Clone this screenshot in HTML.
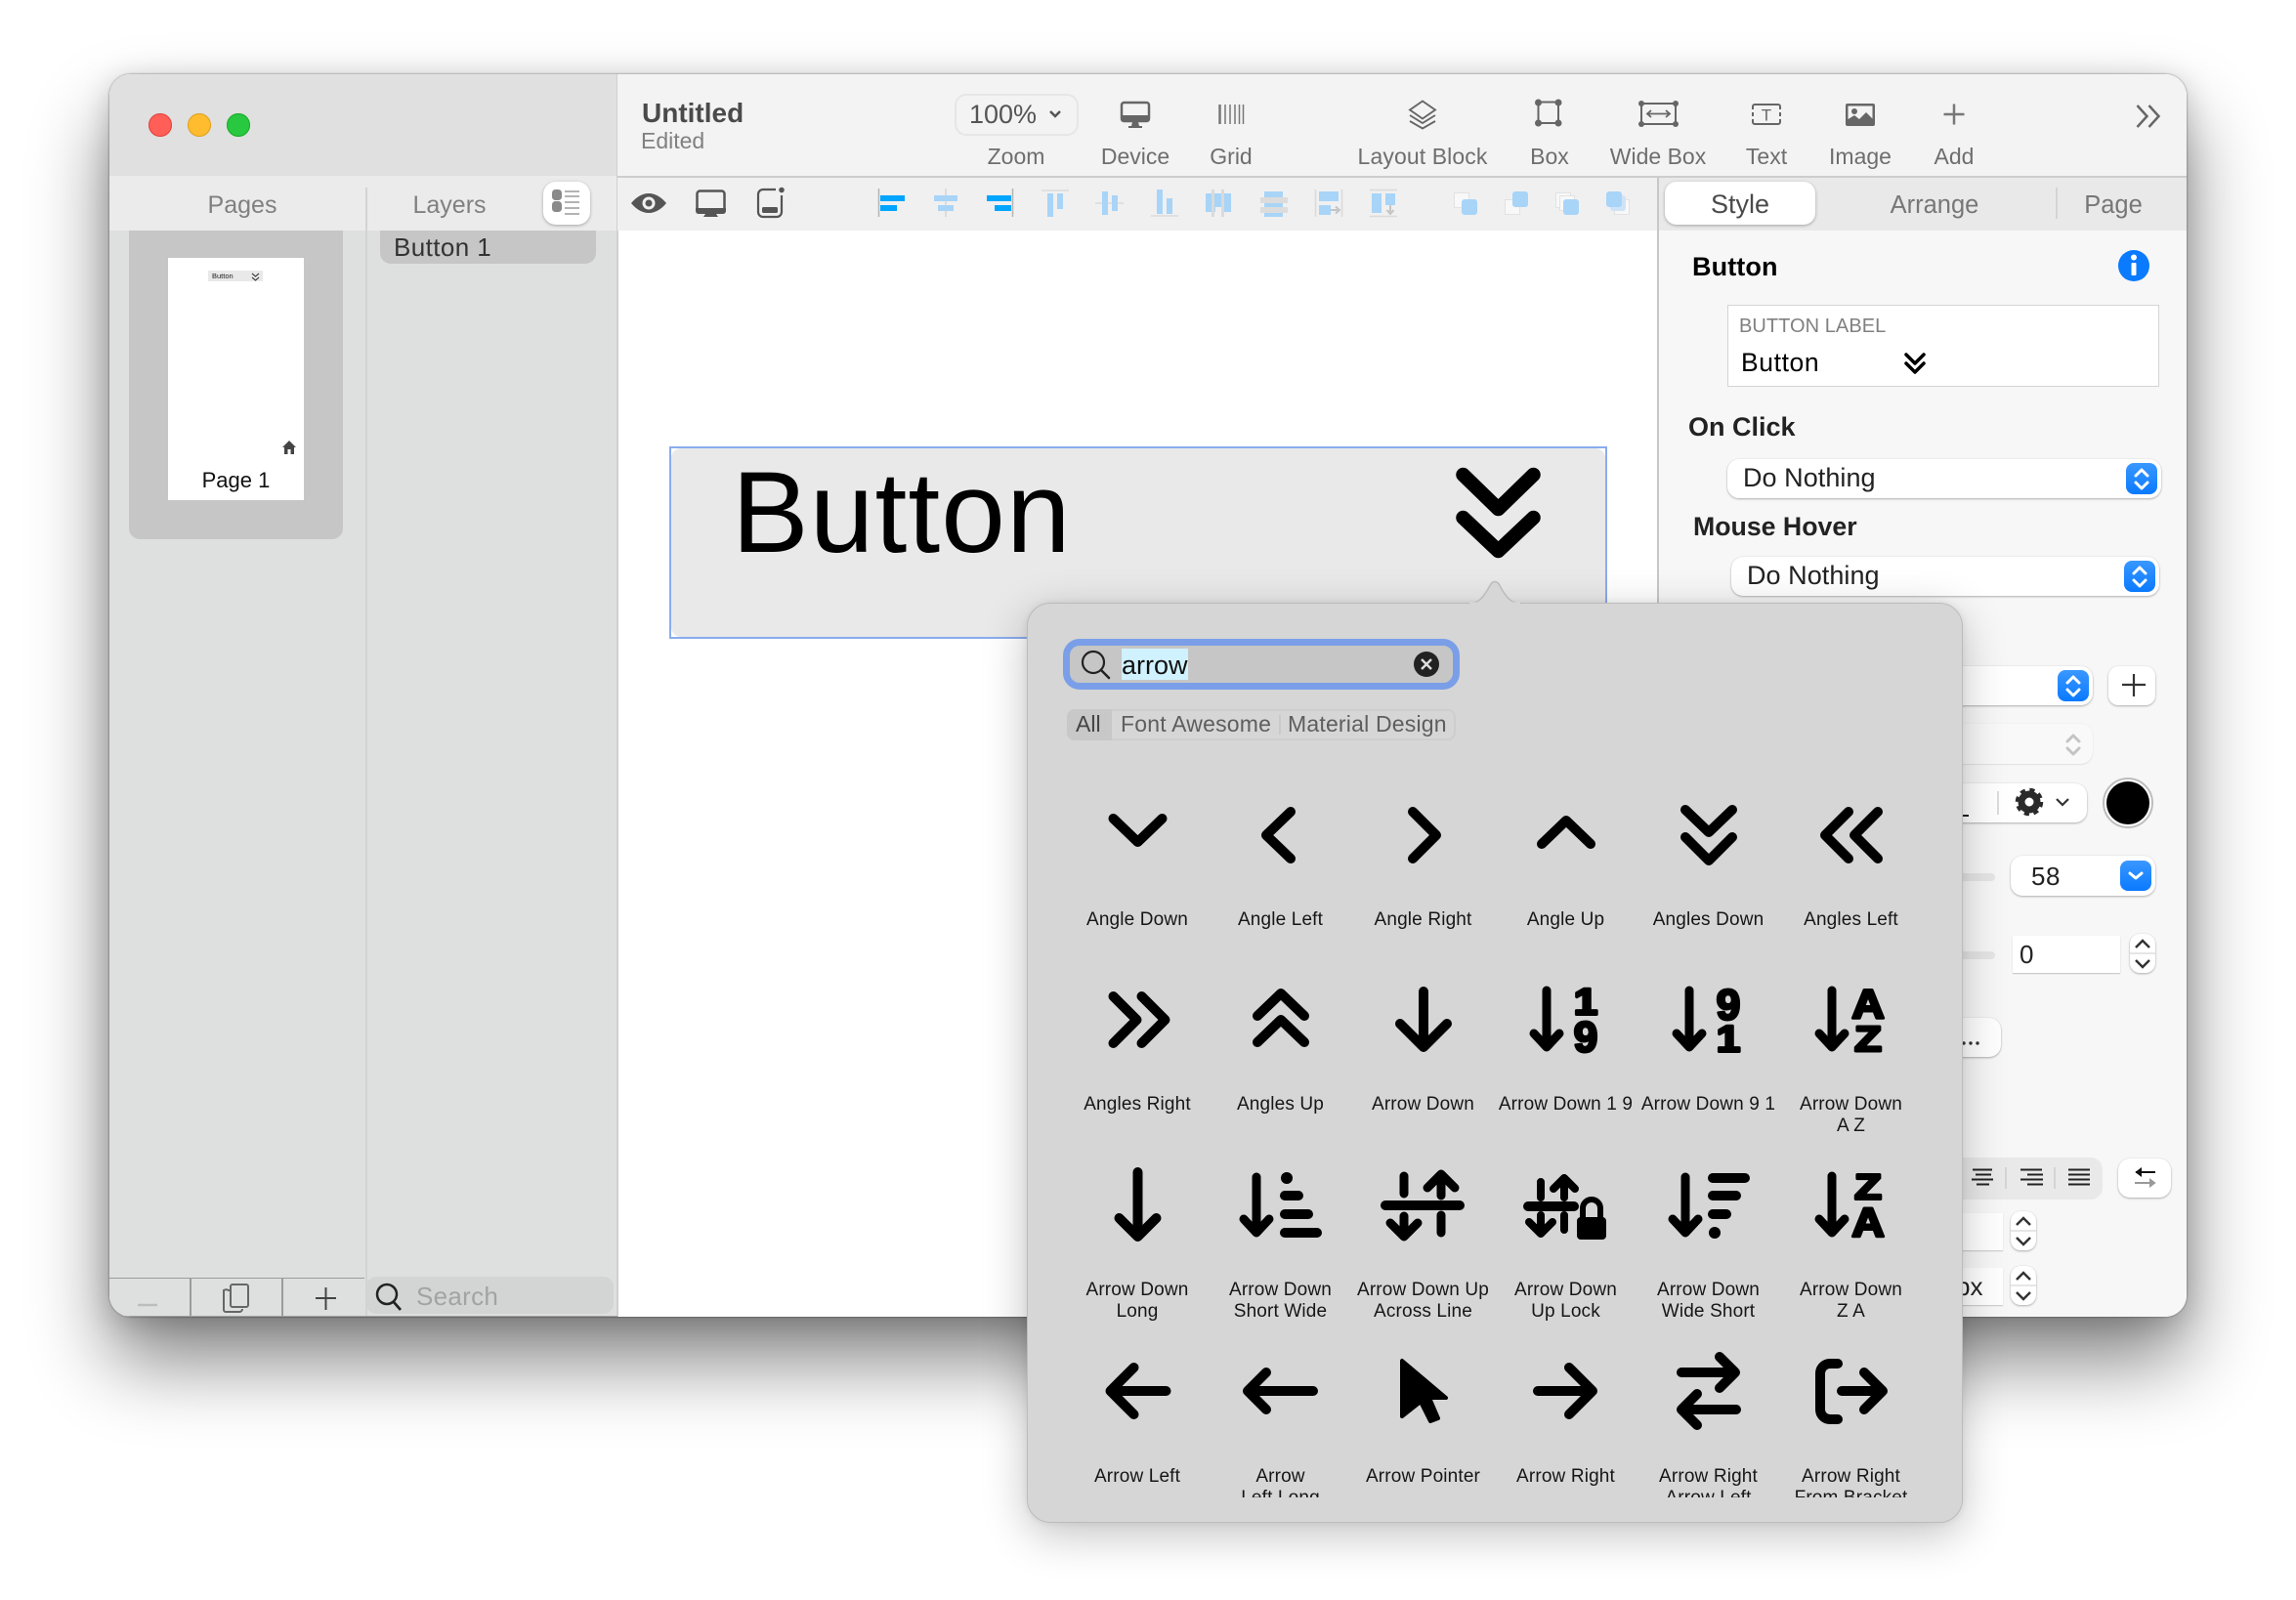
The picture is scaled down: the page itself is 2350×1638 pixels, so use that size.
<!DOCTYPE html>
<html><head><meta charset="utf-8"><title>Untitled</title>
<style>
html,body{margin:0;padding:0;background:#fff}
body{width:2350px;height:1638px;position:relative;overflow:hidden;font-family:"Liberation Sans",sans-serif}
.a{position:absolute}
.t{position:absolute;white-space:nowrap;line-height:1}
.c{transform:translateX(-50%)}
.tb{font-size:23px;color:#6e6e6e;top:149px}
.w{stroke:#fff;stroke-width:3;fill:none;stroke-linecap:round;stroke-linejoin:round}
.field{position:absolute;background:#fff;border-radius:12px;box-shadow:0 1px 2px rgba(0,0,0,.28),0 0 1px rgba(0,0,0,.15)}
.blue{position:absolute;border-radius:8px;background:linear-gradient(#3a97ff,#0a7aff)}
.lab{position:absolute;width:150px;text-align:center;font-size:19px;line-height:22px;color:#161616;letter-spacing:.15px}
</style></head><body>

<!-- window -->
<div class="a" style="left:112px;top:76px;width:2126px;height:1272px;border-radius:22px;box-shadow:0 46px 80px rgba(0,0,0,.48),0 6px 30px rgba(0,0,0,.18),0 0 2px rgba(0,0,0,.5)"></div>
<div class="a" style="left:112px;top:76px;width:2126px;height:1272px;border-radius:22px;overflow:hidden;background:#fff">
 <div style="position:absolute;left:-112px;top:-76px;width:2350px;height:1638px">

  <!-- left -->
  <div class="a" style="left:111px;top:75px;width:521px;height:105px;background:#dfe0df"></div>
  <div class="a" style="left:111px;top:180px;width:521px;height:56px;background:#ebebeb"></div>
  <div class="a" style="left:111px;top:236px;width:521px;height:1113px;background:#dee0df"></div>
  <div class="a" style="left:374px;top:192px;width:1.5px;height:1157px;background:#d2d3d2"></div>
  <div class="a" style="left:631px;top:75px;width:1.5px;height:1274px;background:#d0d0d0"></div>
  <div class="a" style="left:152px;top:116px;width:24px;height:24px;border-radius:50%;background:#ff5f57;box-shadow:inset 0 0 0 1px #e0443e"></div>
  <div class="a" style="left:192px;top:116px;width:24px;height:24px;border-radius:50%;background:#febc2e;box-shadow:inset 0 0 0 1px #dea123"></div>
  <div class="a" style="left:232px;top:116px;width:24px;height:24px;border-radius:50%;background:#28c840;box-shadow:inset 0 0 0 1px #1aab29"></div>
  <div class="t c" style="left:248px;top:198px;font-size:25px;color:#808080">Pages</div>
  <div class="t c" style="left:460px;top:198px;font-size:25px;color:#808080">Layers</div>
  <div class="a" style="left:556px;top:186px;width:48px;height:44px;background:#fff;border-radius:13px;box-shadow:0 1px 3px rgba(0,0,0,.3)"></div>
  <div class="a" style="left:132px;top:236px;width:219px;height:316px;background:#c6c6c6;border-radius:0 0 11px 11px"></div>
  <div class="a" style="left:172px;top:264px;width:139px;height:248px;background:#fff"></div>
  <div class="a" style="left:213px;top:277px;width:56px;height:11px;background:#e9e9e9"></div>
  <div class="t" style="left:217px;top:279px;font-size:7.5px;color:#222">Button</div>
  <div class="t c" style="left:241.5px;top:481px;font-size:22px;color:#111">Page 1</div>
  <div class="a" style="left:389px;top:236px;width:221px;height:34px;background:#c6c6c6;border-radius:0 0 11px 11px"></div>
  <div class="t" style="left:403px;top:240px;font-size:26px;color:#333;letter-spacing:.4px">Button 1</div>

  <!-- bottom left bar -->
  <div class="a" style="left:111px;top:1308px;width:262px;height:41px;background:#dee0df;border-top:1.5px solid #9b9b9b;box-sizing:border-box"></div>
  <div class="a" style="left:194px;top:1309px;width:1.5px;height:40px;background:#9b9b9b"></div>
  <div class="a" style="left:288px;top:1309px;width:1.5px;height:40px;background:#9b9b9b"></div>
  <div class="a" style="left:375px;top:1307px;width:253px;height:38px;background:#d3d5d4;border-radius:10px"></div>
  <div class="t" style="left:426px;top:1313.5px;font-size:26px;color:#a3a3a3;letter-spacing:.3px">Search</div>
  <div class="a" style="left:111px;top:1346.5px;width:521px;height:1.5px;background:#9f9f9f"></div>

  <!-- top toolbars -->
  <div class="a" style="left:632px;top:75px;width:1607px;height:105px;background:#f2f3f2"></div>
  <div class="a" style="left:632px;top:180px;width:1607px;height:1.5px;background:#cdcdcd"></div>
  <div class="a" style="left:632px;top:181.5px;width:1065px;height:54.5px;background:#f0f0f0"></div>
  <div class="t" style="left:657px;top:102px;font-size:28px;font-weight:bold;color:#4a4a4a">Untitled</div>
  <div class="t" style="left:656px;top:133px;font-size:23px;color:#808080">Edited</div>
  <div class="a" style="left:977px;top:96px;width:127px;height:43px;box-sizing:border-box;border:2px solid #e6e6e6;border-radius:12px"></div>
  <div class="t" style="left:992px;top:104px;font-size:27px;color:#555">100%</div>
  <div class="t tb c" style="left:1040px">Zoom</div>
  <div class="t tb c" style="left:1162px">Device</div>
  <div class="t tb c" style="left:1260px">Grid</div>
  <div class="t tb c" style="left:1456px;letter-spacing:.1px">Layout Block</div>
  <div class="t tb c" style="left:1586px">Box</div>
  <div class="t tb c" style="left:1697px">Wide Box</div>
  <div class="t tb c" style="left:1808px">Text</div>
  <div class="t tb c" style="left:1904px">Image</div>
  <div class="t tb c" style="left:2000px">Add</div>

  <!-- canvas button -->
  <div class="a" style="left:685px;top:457px;width:960px;height:197px;box-sizing:border-box;border:2px solid #8aacee;background:#fff"></div>
  <div class="a" style="left:687px;top:459px;width:956px;height:193px;background:#e9e9e9;border-radius:10px"></div>
  <div class="t" style="left:749px;top:466px;font-size:118px;color:#000;letter-spacing:1.1px">Button</div>

  <!-- right panel -->
  <div class="a" style="left:1697px;top:181.5px;width:542px;height:54.5px;background:#e9e9e9"></div>
  <div class="a" style="left:1697px;top:236px;width:542px;height:1113px;background:#f7f7f7"></div>
  <div class="a" style="left:1696px;top:181px;width:1.5px;height:1168px;background:#c8c8c8"></div>
  <div class="a" style="left:1704px;top:186px;width:154px;height:44px;background:#fff;border-radius:12px;box-shadow:0 1px 3px rgba(0,0,0,.3)"></div>
  <div class="t c" style="left:1781px;top:196px;font-size:27px;color:#4a4a4a">Style</div>
  <div class="t c" style="left:1980px;top:198px;font-size:25.5px;color:#777">Arrange</div>
  <div class="t c" style="left:2163px;top:198px;font-size:25.5px;color:#777">Page</div>
  <div class="a" style="left:2104px;top:192px;width:1.5px;height:32px;background:#d4d4d4"></div>
  <div class="t" style="left:1732px;top:260px;font-size:27px;font-weight:bold;color:#000;letter-spacing:.1px">Button</div>
  <div class="a" style="left:1768px;top:312px;width:442px;height:84px;box-sizing:border-box;background:#fff;border:1.5px solid #d4d4d4"></div>
  <div class="t" style="left:1780px;top:323.500px;font-size:20px;color:#808080;letter-spacing:.05px">BUTTON LABEL</div>
  <div class="t" style="left:1782px;top:358px;font-size:26.5px;color:#000;letter-spacing:.6px">Button</div>
  <div class="t" style="left:1728px;top:424px;font-size:27px;font-weight:bold;color:#222">On Click</div>
  <div class="field" style="left:1768px;top:470px;width:444px;height:40px"></div>
  <div class="t" style="left:1784px;top:476px;font-size:27px;color:#222;letter-spacing:.05px">Do Nothing</div>
  <div class="blue" style="left:2176px;top:474px;width:32px;height:32px"></div>
  <div class="t" style="left:1733px;top:526px;font-size:26.7px;font-weight:bold;color:#222">Mouse Hover</div>
  <div class="field" style="left:1772px;top:570px;width:438px;height:40px"></div>
  <div class="t" style="left:1788px;top:576px;font-size:27px;color:#222;letter-spacing:.05px">Do Nothing</div>
  <div class="blue" style="left:2174px;top:574px;width:32px;height:32px"></div>

  <div class="field" style="left:1800px;top:682px;width:342px;height:40px"></div>
  <div class="blue" style="left:2106px;top:686px;width:32px;height:32px"></div>
  <div class="field" style="left:2158px;top:682px;width:48px;height:40px;border-radius:10px"></div>
  <div class="field" style="left:1800px;top:741px;width:342px;height:41px;background:#f9f9f9;box-shadow:0 0 1px rgba(0,0,0,.12),0 1px 1px rgba(0,0,0,.08)"></div>
  <div class="field" style="left:1800px;top:802px;width:336px;height:40px"></div>
  <div class="a" style="left:2044px;top:810px;width:2px;height:24px;background:#dcdcdc"></div>
  <div class="a" style="left:2005px;top:834px;width:10px;height:2px;background:#222"></div>
  <div class="a" style="left:1800px;top:894px;width:242px;height:8px;border-radius:4px;background:#e6e6e6"></div>
  <div class="field" style="left:2058px;top:876px;width:148px;height:41px"></div>
  <div class="t" style="left:2079px;top:884px;font-size:26px;color:#222;letter-spacing:.5px">58</div>
  <div class="blue" style="left:2170px;top:881px;width:32px;height:31px"></div>
  <div class="a" style="left:1800px;top:974px;width:242px;height:8px;border-radius:4px;background:#e6e6e6"></div>
  <div class="a" style="left:2060px;top:958px;width:110px;height:38px;background:#fff;box-shadow:0 1px 1px rgba(0,0,0,.22)"></div>
  <div class="t" style="left:2067px;top:964px;font-size:26px;color:#222">0</div>
  <div class="field" style="left:2180px;top:956px;width:26px;height:40px;border-radius:10px"></div>
  <div class="field" style="left:1800px;top:1042px;width:248px;height:40px"></div>
  <div class="a" style="left:1800px;top:1185px;width:352px;height:43px;background:#e9e9e9;border-radius:12px"></div>
  <div class="a" style="left:2052px;top:1195px;width:2px;height:22px;background:#d4d4d4"></div>
  <div class="a" style="left:2102px;top:1195px;width:2px;height:22px;background:#d4d4d4"></div>
  <div class="field" style="left:2168px;top:1186px;width:54px;height:40px"></div>
  <div class="a" style="left:1800px;top:1242px;width:250px;height:38px;background:#fff;box-shadow:0 1px 1px rgba(0,0,0,.2)"></div>
  <div class="field" style="left:2058px;top:1240px;width:26px;height:40px;border-radius:10px"></div>
  <div class="a" style="left:1800px;top:1298px;width:250px;height:38px;background:#fff;box-shadow:0 1px 1px rgba(0,0,0,.2)"></div>
  <div class="t" style="left:2002px;top:1304px;font-size:26px;color:#222">px</div>
  <div class="field" style="left:2058px;top:1296px;width:26px;height:40px;border-radius:10px"></div>

  <!-- window icons -->
  <svg class="a" style="left:0;top:0" width="2350" height="1638" viewBox="0 0 2350 1638" fill="none">
   <!-- chev zoom -->
   <path d="M1075 114l5 5 5-5" stroke="#555" stroke-width="2.500"/>
   <!-- layer list -->
   <g fill="#8a8a8a"><rect x="565" y="194" width="10" height="11" rx="3.500"/><rect x="565" y="206" width="10" height="11" rx="3.500"/></g>
   <g stroke="#9a9a9a" stroke-width="1.600"><path d="M578 196h15M578 201h15M578 207h15M578 213h15M578 219h15"/></g>
   <!-- thumb -->
   <path d="M258 280l3.500 3 3.500-3M258 284l3.500 3 3.500-3" stroke="#222" stroke-width="1"/>
   <path d="M289 458l7-7 7 7h-2v7h-3.500v-5h-3v5H291v-7z" fill="#444"/>
   <!-- bottom bar -->
   <path d="M141 1336h20" stroke="#bdbdbd" stroke-width="2.500"/>
   <rect x="236" y="1315" width="18" height="23" rx="2" stroke="#666" stroke-width="2"/>
   <path d="M236 1321h-2a5 5 0 0 0-5 0v20a2 2 0 0 0 2 2h14a3 3 0 0 0 3-3" stroke="#666" stroke-width="2"/>
   <path d="M323 1329h21M333.500 1318v23" stroke="#444" stroke-width="2"/>
   <circle cx="396" cy="1325" r="10" stroke="#222" stroke-width="2.500"/><path d="M403 1333l7 8" stroke="#222" stroke-width="2.800"/>
   <!-- device -->
   <rect x="1148" y="105" width="28" height="19" rx="2.500" stroke="#666" stroke-width="2.500"/><path d="M1147 118h30v4a3 3 0 0 1-3 3h-24a3 3 0 0 1-3-3z" fill="#666"/><path d="M1159 125h6l1 4h3v2h-14v-2h3z" fill="#666"/>
   <!-- grid -->
   <path d="M1248.500 107v20" stroke="#777" stroke-width="2.500"/><path d="M1254 107v20M1259 107v20M1264 107v20M1268.500 107v20M1272.500 107v20" stroke="#777" stroke-width="1.500"/>
   <!-- layout block -->
   <path d="M1456 103.500l13 9-13 9-13-9z" stroke="#666" stroke-width="1.900"/><path d="M1443 118l13 8 13-8M1443 124l13 7.500 13-7.500" stroke="#666" stroke-width="1.900"/>
   <!-- box -->
   <path d="M1575 104.500h18M1575 126h18M1574.500 107v17M1595 107v17" stroke="#666" stroke-width="2"/><g fill="#666"><circle cx="1574.500" cy="105" r="3.500"/><circle cx="1595" cy="105" r="3.500"/><circle cx="1574.500" cy="126" r="3.500"/><circle cx="1595" cy="126" r="3.500"/></g>
   <!-- wide box -->
   <path d="M1681 106h33M1681 127h33M1680 108v17M1715 108v17" stroke="#666" stroke-width="2"/><g fill="#666"><circle cx="1680" cy="106" r="3"/><circle cx="1715" cy="106" r="3"/><circle cx="1680" cy="127" r="3"/><circle cx="1715" cy="127" r="3"/></g>
   <path d="M1686 116.500h23M1690 113l-4 3.500 4 3.500M1705 113l4 3.500-4 3.500" stroke="#666" stroke-width="1.800"/>
   <!-- text -->
   <path d="M1794 112v-3a2 2 0 0 1 2-2h24a2 2 0 0 1 2 2v3M1794 122v3a2 2 0 0 0 2 2h24a2 2 0 0 0 2-2v-3M1794 115v4M1822 115v4" stroke="#666" stroke-width="2"/>
   <text x="1808" y="123.500" font-size="17" fill="#666" text-anchor="middle" font-family="Liberation Sans">T</text>
   <!-- image -->
   <rect x="1889" y="106" width="30" height="23" rx="2" fill="#666"/><rect x="1891.500" y="108.500" width="25" height="18" fill="#f2f3f2"/><circle cx="1898" cy="114" r="3" fill="#666"/><path d="M1890 128v-5l8-5 5 4 7-7 8 8v5z" fill="#666"/>
   <!-- add -->
   <path d="M2000 106.500v21M1989.500 117h21" stroke="#777" stroke-width="2.500"/>
   <!-- expand -->
   <path d="M2187.500 108l10 11-10 11M2199.500 108l10 11-10 11" stroke="#666" stroke-width="2.500"/>

   <!-- eye -->
   <path d="M646 208c5-6 11-10 18-10s13 4 18 10c-5 6-11 10-18 10s-13-4-18-10z" fill="#555"/><circle cx="664" cy="208" r="6.500" fill="#f0f0f0"/><circle cx="664" cy="208" r="3.500" fill="#555"/>
   <!-- monitor -->
   <rect x="713.500" y="195.500" width="28" height="22" rx="3" stroke="#555" stroke-width="2.500"/><path d="M712 213h31v3a3 3 0 0 1-3 3h-25a3 3 0 0 1-3-3z" fill="#555"/><path d="M722 219h11l2 3h-15z" fill="#555"/>
   <!-- phone -->
   <path d="M794 194h-13a5 5 0 0 0-5 5v18a5 5 0 0 0 5 5h14a5 5 0 0 0 5-5v-17" stroke="#555" stroke-width="2.200"/><circle cx="800" cy="194.500" r="2.800" fill="#555"/><rect x="780" y="212" width="16" height="6" rx="1.500" fill="#555"/>

   <!-- align -->
   <path d="M899.500 193v29" stroke="#b5b5b5" stroke-width="1.500"/>
   <rect x="901" y="200" width="25" height="6" fill="#00a5ff"/><rect x="901" y="210" width="17" height="6" fill="#00a5ff"/>
   <path d="M968 193v29" stroke="#d6d6d6" stroke-width="1.500"/>
   <rect x="956" y="200" width="24" height="6" fill="#a8d4f8"/><rect x="960" y="210" width="16" height="6" fill="#a8d4f8"/>
   <path d="M1036.500 193v29" stroke="#b5b5b5" stroke-width="1.500"/>
   <rect x="1010" y="200" width="25" height="6" fill="#00a5ff"/><rect x="1018" y="210" width="17" height="6" fill="#00a5ff"/>
   <path d="M1066 195h28" stroke="#dadada" stroke-width="1.500"/><rect x="1072" y="198" width="6" height="24" fill="#a8d4f8"/><rect x="1082" y="198" width="6" height="16" fill="#a8d4f8"/>
   <path d="M1121 208h29" stroke="#dadada" stroke-width="1.500"/><rect x="1128" y="196" width="6" height="24" fill="#a8d4f8"/><rect x="1138" y="200" width="6" height="16" fill="#a8d4f8"/>
   <path d="M1178 221h28" stroke="#dadada" stroke-width="1.500"/><rect x="1184" y="194" width="6" height="25" fill="#a8d4f8"/><rect x="1194" y="203" width="6" height="16" fill="#a8d4f8"/>
   <rect x="1234" y="198" width="26" height="19" fill="#a8d4f8"/><rect x="1244" y="212" width="6" height="6" fill="#f0f0f0"/><path d="M1241.500 194v28M1251.500 194v28" stroke="#dadada" stroke-width="3"/>
   <rect x="1294" y="196" width="19" height="26" fill="#a8d4f8"/><rect x="1290" y="202" width="28" height="6" fill="#dcdcdc"/><rect x="1290" y="212" width="28" height="6" fill="#dcdcdc"/>
   <path d="M1346.500 194v28M1373.500 194v28" stroke="#dadada" stroke-width="1.500"/><rect x="1350" y="196" width="20" height="10" fill="#a8d4f8"/><rect x="1350" y="210" width="12" height="10" fill="#a8d4f8"/><path d="M1362 215h7M1367 211.500l4 3.500-4 3.500" stroke="#c4c4c4" stroke-width="2"/>
   <path d="M1402 194.500h28M1402 221.500h28" stroke="#dadada" stroke-width="1.500"/><rect x="1404" y="198" width="10" height="20" fill="#a8d4f8"/><rect x="1418" y="198" width="10" height="12" fill="#a8d4f8"/><path d="M1423 210v7M1419.500 215l3.500 4 3.500-4" stroke="#c4c4c4" stroke-width="2"/>
   <rect x="1488.500" y="197.500" width="15" height="15" fill="#f8f8f8" stroke="#e2e2e2"/><rect x="1496" y="204" width="16" height="16" rx="3" fill="#a8d4f8"/>
   <rect x="1540.500" y="204.500" width="15" height="15" fill="#f8f8f8" stroke="#e2e2e2"/><rect x="1548" y="196" width="16" height="16" rx="3" fill="#a8d4f8"/>
   <rect x="1592.500" y="197.500" width="15" height="15" fill="#f8f8f8" stroke="#e2e2e2"/><rect x="1596.500" y="200.500" width="15" height="15" fill="#f8f8f8" stroke="#e2e2e2"/><rect x="1600" y="204" width="16" height="16" rx="3" fill="#a8d4f8"/>
   <rect x="1652.500" y="204.500" width="15" height="15" fill="#f8f8f8" stroke="#e2e2e2"/><rect x="1648" y="200" width="16" height="16" rx="3" fill="#cfe3f7"/><rect x="1644" y="196" width="16" height="16" rx="3" fill="#a8d4f8"/>

   <!-- big chevrons -->
   <path d="M1497.500 486l36 35 36-35M1497.500 530l36 34 36-34" stroke="#000" stroke-width="14.500" stroke-linecap="round" stroke-linejoin="round"/>

   <!-- panel icons -->
   <circle cx="2184" cy="272" r="16" fill="#0a7aff"/><rect x="2181.500" y="269" width="5" height="13" rx="1" fill="#fff"/><circle cx="2184" cy="263.500" r="3" fill="#fff"/>
   <path d="M1951 363l9 9 9-9M1951 372l9 9 9-9" stroke="#000" stroke-width="3.500" stroke-linecap="round" stroke-linejoin="round"/>
   <path class="w" d="M2186 487l6-6 6 6M2186 494l6 6 6-6"/>
   <path class="w" d="M2184 587l6-6 6 6M2184 594l6 6 6-6"/>
   <path class="w" d="M2116 699l6-6 6 6M2116 706l6 6 6-6"/>
   <path d="M2116 759l6-6 6 6M2116 766l6 6 6-6" stroke="#c4c4c4" stroke-width="3" stroke-linecap="round" stroke-linejoin="round"/>
   <path d="M2172 701h24M2184 690v23" stroke="#333" stroke-width="2.200"/>
   <circle cx="2077" cy="821" r="12" stroke="#2a2a2a" stroke-width="4.500" stroke-dasharray="5 4.420"/>
   <circle cx="2077" cy="821" r="8" stroke="#2a2a2a" stroke-width="7"/>
   <path d="M2105 818l6 6 6-6" stroke="#333" stroke-width="2.200"/>
   <circle cx="2178" cy="822" r="25" stroke="#bdbdbd" stroke-width="2" fill="#fff"/><circle cx="2178" cy="822" r="22" fill="#000"/>
   <path class="w" d="M2180 894l6 5 6-5"/>
   <path d="M2186 970l7-7 7 7M2186 983l7 7 7-7" stroke="#333" stroke-width="2.500"/><path d="M2180 976h26" stroke="#ddd" stroke-width="1.500"/>
   <g fill="#333"><circle cx="2010" cy="1068" r="1.700"/><circle cx="2017" cy="1068" r="1.700"/><circle cx="2024" cy="1068" r="1.700"/></g>
   <g stroke="#222" stroke-width="2" transform="translate(0 1.500)"><path d="M2019 1196h20M2022 1201h16M2018 1206h22M2023 1211h13"/><path d="M2068 1196h22M2075 1201h16M2068 1206h23M2075 1211h16"/><path d="M2117 1196h22M2117 1201h22M2117 1206h22M2117 1211h22"/></g>
   <path d="M2186 1200h20M2187 1200l4-3v6z" stroke="#111" stroke-width="2" fill="#111"/><path d="M2185 1211h20M2205 1211l-4-3v6z" stroke="#999" stroke-width="2" fill="#999"/>
   <path d="M2064 1254l7-7 7 7M2064 1267l7 7 7-7" stroke="#333" stroke-width="2.500"/><path d="M2058 1260h26" stroke="#ddd" stroke-width="1.500"/>
   <path d="M2064 1310l7-7 7 7M2064 1323l7 7 7-7" stroke="#333" stroke-width="2.500"/><path d="M2058 1316h26" stroke="#ddd" stroke-width="1.500"/>
  </svg>
 </div>
</div>

<!-- popover -->
<div class="a" style="left:1051px;top:617px;width:958px;height:942px;box-sizing:border-box;background:#d6d6d6;border:1.5px solid #bcbcbc;border-radius:24px;box-shadow:0 12px 46px rgba(0,0,0,.24),0 0 8px rgba(0,0,0,.08)"></div>
<svg class="a" style="left:1490px;top:585px" width="90" height="36" viewBox="1490 585 90 36" fill="none">
 <path d="M1503 617.700c10 0 14-5 19-13l4-7q4-4.500 8 0l4 7c5 8 9 13 19 13" fill="#d6d6d6" stroke="#bcbcbc" stroke-width="1.500"/>
 <rect x="1504" y="616.500" width="52" height="3" fill="#d6d6d6"/>
</svg>

<div class="a" style="left:1088px;top:654px;width:406px;height:52px;box-sizing:border-box;border:7px solid #7a9fe8;border-radius:17px;background:#c6c6c6"></div>
<div class="a" style="left:1148px;top:664px;width:68px;height:32px;background:#d0f2ff"></div>
<div class="t" style="left:1148px;top:668px;font-size:27px;color:#111">arrow</div>
<div class="a" style="left:1092px;top:726px;width:398px;height:32px;box-sizing:border-box;border:2px solid #cecece;border-radius:8px"></div>
<div class="a" style="left:1092px;top:726px;width:46px;height:32px;background:#c8c8c8;border-radius:8px 0 0 8px"></div>
<div class="a" style="left:1309px;top:732px;width:1.5px;height:20px;background:#cacaca"></div>
<div class="t" style="left:1101px;top:729.5px;font-size:23px;color:#444">All</div>
<div class="t" style="left:1147px;top:729.5px;font-size:23px;color:#5e5e5e;letter-spacing:.2px">Font Awesome</div>
<div class="t" style="left:1318px;top:729.5px;font-size:23px;color:#5e5e5e;letter-spacing:.2px">Material Design</div>

<svg class="a" style="left:0;top:0" width="2350" height="1638" viewBox="0 0 2350 1638" fill="none">
 <circle cx="1119" cy="678" r="11" stroke="#222" stroke-width="2.200"/><path d="M1127 686l8 8" stroke="#222" stroke-width="2.500" stroke-linecap="round"/>
 <circle cx="1460" cy="680" r="13" fill="#222"/><path d="M1455 675l10 10M1465 675l-10 10" stroke="#ddd" stroke-width="2.500"/>

 <g transform="translate(-1 0)" stroke="#000" stroke-width="10" stroke-linecap="round" stroke-linejoin="round" font-family="Liberation Sans" font-weight="bold" text-anchor="middle">
  <!-- row 1 -->
  <g transform="translate(1165.500 855)"><path d="M-25-17L0 7l25-24"/></g>
  <g transform="translate(1312 855)"><path d="M10-24L-15 0l25 24"/></g>
  <g transform="translate(1458 855)"><path d="M-11-24L13 0l-24 24"/></g>
  <g transform="translate(1604 855)"><path d="M-25 9L0-15l25 24"/></g>
  <g transform="translate(1750 855)"><path d="M-24-26L0-3l24-23M-24 2L0 26 24 2"/></g>
  <g transform="translate(1896 855)"><path d="M-3-24L-27 0l24 24M27-24L3 0l24 24"/></g>
  <!-- row 2 -->
  <g transform="translate(1165.500 1046)"><path d="M-25-26L-1-2l-24 24M4-26L28-2 4 22"/></g>
  <g transform="translate(1312 1046)"><path d="M-24-6L0-29l24 23M-24 21L0-2l24 23"/></g>
  <g transform="translate(1458 1046)"><path d="M0-31V26M-24 2L0 26 24 2"/></g>
  <g transform="translate(1604 1046)" stroke-width="9"><path d="M-20-32V26M-33 12l13 14 13-14"/>
    <text transform="translate(20 -7.500) scale(1.150 1)" font-size="38" fill="#000" stroke-width="3">1</text><text x="20" y="30.500" font-size="44" fill="#000" stroke-width="3">9</text></g>
  <g transform="translate(1750 1046)" stroke-width="9"><path d="M-20-32V26M-33 12l13 14 13-14"/>
    <text x="20" y="-2.500" font-size="44" fill="#000" stroke-width="3">9</text><text transform="translate(20 30.500) scale(1.150 1)" font-size="38" fill="#000" stroke-width="3">1</text></g>
  <g transform="translate(1896 1046)" stroke-width="9"><path d="M-20-32V26M-33 12l13 14 13-14"/>
    <text transform="translate(17 -3.500) scale(1.100 1)" font-size="42" fill="#000" stroke-width="3">A</text><text transform="translate(17 30) scale(1.250 1)" font-size="36" fill="#000" stroke-width="3">Z</text></g>
  <!-- row 3 -->
  <g transform="translate(1165.500 1236)"><path d="M0-36V30M-19 11L0 30l19-19"/></g>
  <g transform="translate(1312 1236)"><path d="M-25-31V26M-38 12l13 14 13-14" stroke-width="9"/><path d="M6-30h.01" stroke-width="12"/><path d="M4-12H18M4 7H28M4 26H37"/></g>
  <g transform="translate(1458 1236)"><path d="M-39-2H37"/><path d="M-20-32V-14M-20 9V30M-34 16l14 14 14-14M18-34V-12M18 8V26M4-20l14-14 14 14" stroke-width="9"/></g>
  <g transform="translate(1604 1236)"><path d="M-39-1H8"/><path d="M-26-26V-10M-26 8V27M-38 15l12 12 12-12M-2-30V-10M-2 8V23M-13-19l11-11 11 11" stroke-width="8"/><rect x="11" y="10" width="30" height="23" rx="4" fill="#000" stroke="none"/><path d="M17 11V1a9 9 0 0 1 18 0V11" stroke-width="6"/></g>
  <g transform="translate(1750 1236)"><path d="M-24-31V26M-37 12l13 14 13-14" stroke-width="9"/><path d="M4-30H37M4-12H28M4 7H18"/><path d="M6 26h.01" stroke-width="12"/></g>
  <g transform="translate(1896 1236)" stroke-width="9"><path d="M-20-32V26M-33 12l13 14 13-14"/>
    <text transform="translate(17 -8.500) scale(1.250 1)" font-size="36" fill="#000" stroke-width="3">Z</text><text transform="translate(17 30) scale(1.100 1)" font-size="42" fill="#000" stroke-width="3">A</text></g>
  <!-- row 4 -->
  <g transform="translate(1165.500 1425)"><path d="M-28-1H29M-4-25L-28-1-4 23"/></g>
  <g transform="translate(1312 1425)"><path d="M-34-1H33M-15-20L-34-1l19 19"/></g>
  <g transform="translate(1458 1425)"><path d="M-22-32V25L-3 10 7 30l8-3-9-21h17z" fill="#000" stroke-width="4"/></g>
  <g transform="translate(1604 1425)"><path d="M-29-1H27M3-25L27-1 3 23"/></g>
  <g transform="translate(1750 1425)"><path d="M-28-20H27M11-36l16 16-16 16M28 18H-28M-12 2l-16 16 16 16"/></g>
  <g transform="translate(1896 1425)"><path d="M-14-29H-22a10 10 0 0 0-10 10V18a10 10 0 0 0 10 10H-14M-10-1H32M13-20L32-1 13 18"/></g>
 </g>
</svg>

<div class="a" style="left:1051px;top:900px;width:958px;height:633px;overflow:hidden">
 <div style="position:relative;left:-1052.500px;top:-900px;width:2350px;height:1638px">
  <div class="lab" style="left:1090.500px;top:930.500px">Angle Down</div>
  <div class="lab" style="left:1237px;top:930.500px">Angle Left</div>
  <div class="lab" style="left:1383px;top:930.500px">Angle Right</div>
  <div class="lab" style="left:1529px;top:930.500px">Angle Up</div>
  <div class="lab" style="left:1675px;top:930.500px">Angles Down</div>
  <div class="lab" style="left:1821px;top:930.500px">Angles Left</div>
  <div class="lab" style="left:1090.500px;top:1120px">Angles Right</div>
  <div class="lab" style="left:1237px;top:1120px">Angles Up</div>
  <div class="lab" style="left:1383px;top:1120px">Arrow Down</div>
  <div class="lab" style="left:1529px;top:1120px">Arrow Down 1 9</div>
  <div class="lab" style="left:1675px;top:1120px">Arrow Down 9 1</div>
  <div class="lab" style="left:1821px;top:1120px">Arrow Down<br>A Z</div>
  <div class="lab" style="left:1090.500px;top:1310px">Arrow Down<br>Long</div>
  <div class="lab" style="left:1237px;top:1310px">Arrow Down<br>Short Wide</div>
  <div class="lab" style="left:1383px;top:1310px">Arrow Down Up<br>Across Line</div>
  <div class="lab" style="left:1529px;top:1310px">Arrow Down<br>Up Lock</div>
  <div class="lab" style="left:1675px;top:1310px">Arrow Down<br>Wide Short</div>
  <div class="lab" style="left:1821px;top:1310px">Arrow Down<br>Z A</div>
  <div class="lab" style="left:1090.500px;top:1501px">Arrow Left</div>
  <div class="lab" style="left:1237px;top:1501px">Arrow<br>Left Long</div>
  <div class="lab" style="left:1383px;top:1501px">Arrow Pointer</div>
  <div class="lab" style="left:1529px;top:1501px">Arrow Right</div>
  <div class="lab" style="left:1675px;top:1501px">Arrow Right<br>Arrow Left</div>
  <div class="lab" style="left:1821px;top:1501px">Arrow Right<br>From Bracket</div>
 </div>
</div>
</body></html>
